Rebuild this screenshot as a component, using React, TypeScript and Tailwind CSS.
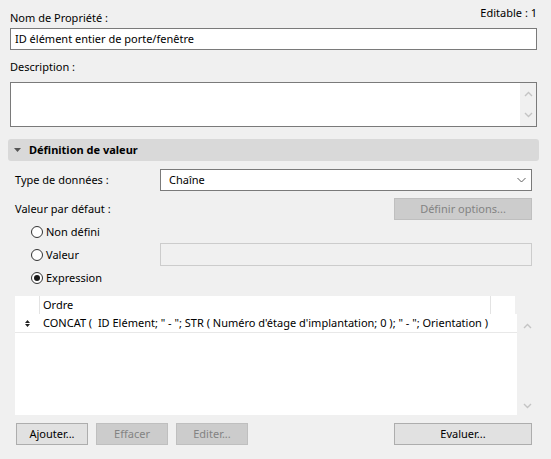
import React from "react";

function Radio({ checked, label }: { checked?: boolean; label: string }) {
  return (
    <div className="flex items-center gap-[3px]">
      <span className="w-[12px] h-[12px] shrink-0 rounded-full border border-[#333333] bg-white flex items-center justify-center">
        {checked && <span className="w-[6px] h-[6px] rounded-full bg-[#1a1a1a]" />}
      </span>
      <span>{label}</span>
    </div>
  );
}

function Btn({ label, disabled, w }: { label: string; disabled?: boolean; w: string }) {
  return (
    <div
      className={
        "h-[22px] shrink-0 flex items-center justify-center border " +
        w +
        " " +
        (disabled
          ? "bg-[#cccccc] border-[#bfbfbf] text-[#838383]"
          : "bg-[#e1e1e1] border-[#adadad] text-black")
      }
    >
      {label}
    </div>
  );
}

const Up = () => (
  <svg width="9" height="6" viewBox="0 0 9 6">
    <path d="M1 5 L4.5 1.5 L8 5" fill="none" stroke="#c4c4c4" strokeWidth="1.4" />
  </svg>
);
const Down = () => (
  <svg width="9" height="6" viewBox="0 0 9 6">
    <path d="M1 1 L4.5 4.5 L8 1" fill="none" stroke="#c4c4c4" strokeWidth="1.4" />
  </svg>
);

export default function App() {
  return (
    <div
      className="w-[551px] h-[459px] bg-[#f0f0f0] text-black text-[11px] leading-[16px] overflow-hidden"
      style={{ fontFamily: '"Noto Sans", "Open Sans", sans-serif' }}
    >
      <div className="pl-[10px] pr-[14px]">
        <div className="flex justify-between h-[28px]">
          <span className="mt-[10px]">Nom de Propriété :</span>
          <span className="mt-[5px]">Editable : 1</span>
        </div>
        <div className="h-[22px] border border-[#7a7a7a] bg-white flex items-center pl-[4px]">
          ID élément entier de porte/fenêtre
        </div>
        <div className="h-[32px] flex items-center pt-[1px]">Description :</div>
        <div className="h-[45px] border border-[#7a7a7a] bg-white flex justify-end">
          <div className="w-[16px] bg-[#f0f0f0] flex flex-col items-center justify-between py-[8px]">
            <Up />
            <Down />
          </div>
        </div>
      </div>

      <div className="ml-[8px] mr-[12px] mt-[12px] h-[22px] bg-[#d9d9d9] rounded-[3px] flex items-center">
        <svg width="7" height="4" viewBox="0 0 7 4" className="ml-[6px] mr-[8px]">
          <path d="M0 0 H7 L3.5 4 Z" fill="#555555" />
        </svg>
        <span className="font-bold">Définition de valeur</span>
      </div>

      <div className="pl-[15px] pr-[19px]">
        <div className="mt-[8px] flex items-center h-[22px]">
          <span className="w-[145px] shrink-0">Type de données :</span>
          <div className="flex-1 h-[22px] border border-[#7a7a7a] bg-white flex items-center justify-between pl-[8px] pr-[5px]">
            <span>Chaîne</span>
            <svg width="9" height="6" viewBox="0 0 9 6">
              <path d="M0.5 1 L4.5 5 L8.5 1" fill="none" stroke="#606060" strokeWidth="1" />
            </svg>
          </div>
        </div>
        <div className="mt-[7px] flex items-center justify-between h-[22px]">
          <span>Valeur par défaut :</span>
          <Btn label="Définir options..." disabled w="w-[138px]" />
        </div>
        <div className="pl-[16px]">
          <div className="h-[23px] flex items-center pt-[1px]">
            <Radio label="Non défini" />
          </div>
          <div className="h-[23px] flex items-center">
            <div className="w-[129px] shrink-0">
              <Radio label="Valeur" />
            </div>
            <div className="flex-1 h-[23px] border border-[#cccccc] bg-[#f0f0f0]" />
          </div>
          <div className="h-[24px] flex items-center">
            <Radio checked label="Expression" />
          </div>
        </div>
      </div>

      <div className="ml-[15px] mr-[14px] mt-[6px] h-[119px] flex flex-col">
        <div className="h-[18px] flex">
          <div className="w-[500px] bg-white flex">
            <div className="w-[25px] shrink-0 border-r border-[#e3e3e3]" />
            <div className="flex-1 pl-[3px] flex items-center border-r border-[#e3e3e3]">Ordre</div>
            <div className="w-[24px] shrink-0" />
          </div>
        </div>
        <div className="flex-1 flex">
          <div className="w-[502px] shrink-0 bg-white overflow-hidden">
            <div className="h-[19px] flex items-center border-b border-[#e8e8e8]">
              <div className="w-[28px] shrink-0 flex justify-start pl-[10px]">
                <svg width="5" height="7" viewBox="0 0 5 7">
                  <path d="M0 3 L2.5 0 L5 3 Z M0 4 L2.5 7 L5 4 Z" fill="#222222" />
                </svg>
              </div>
              <span className="whitespace-pre">
                {'CONCAT (  ID Elément; " - "; STR ( Numéro d\'étage d\'implantation; 0 ); " - "; Orientation )'}
              </span>
            </div>
          </div>
          <div className="flex-1 flex flex-col items-center justify-between pt-[9px] pb-[6px] pl-[1px]">
            <Up />
            <Down />
          </div>
        </div>
      </div>

      <div className="ml-[16px] mr-[19px] mt-[8px] flex items-center gap-[8px]">
        <Btn label="Ajouter..." w="w-[72px]" />
        <Btn label="Effacer" disabled w="w-[72px]" />
        <Btn label="Editer..." disabled w="w-[72px]" />
        <div className="flex-1" />
        <Btn label="Evaluer..." w="w-[138px]" />
      </div>
    </div>
  );
}
